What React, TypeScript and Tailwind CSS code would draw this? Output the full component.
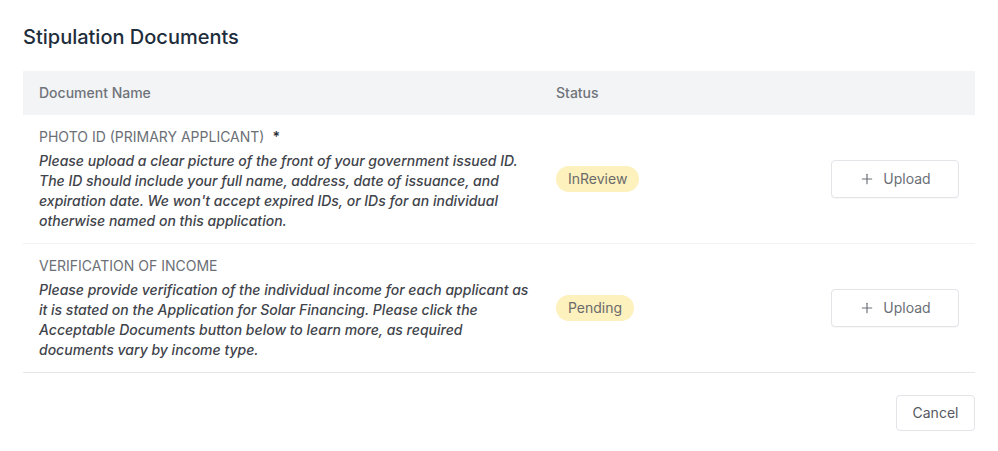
import { Plus } from 'lucide-react';

type Stip = {
  name: string;
  required?: boolean;
  description: string;
  status: string;
};

const STIPS: Stip[] = [
  {
    name: 'Photo ID (Primary Applicant)',
    required: true,
    description:
      "Please upload a clear picture of the front of your government issued ID. The ID should include your full name, address, date of issuance, and expiration date. We won't accept expired IDs, or IDs for an individual otherwise named on this application.",
    status: 'InReview',
  },
  {
    name: 'Verification of Income',
    description:
      'Please provide verification of the individual income for each applicant as it is stated on the Application for Solar Financing. Please click the Acceptable Documents button below to learn more, as required documents vary by income type.',
    status: 'Pending',
  },
];

function StatusBadge({ status }: { status: string }) {
  return (
    <span className="inline-flex h-[26px] items-center rounded-full bg-[#fdf1bd] px-3 text-sm text-[#6b6b6b]">
      {status}
    </span>
  );
}

export default function App() {
  return (
    <div
      className="min-h-screen bg-white px-[23px] pt-[23px]"
      style={{ fontFamily: 'Inter, "Noto Sans", sans-serif' }}
    >
      <h2 className="mb-5 text-xl leading-7 font-medium text-[#1e2d3b]">
        Stipulation Documents
      </h2>

      <div className="border-b border-[#e3e5e8]">
        {/* Header */}
        <div className="grid h-11 grid-cols-[517px_1fr_auto] items-center bg-[#f3f4f6] text-sm font-medium text-[#6f737a]">
          <div className="px-4">Document Name</div>
          <div className="px-4">Status</div>
          <div className="w-[160px]" />
        </div>

        {STIPS.map((s, i) => (
          <div
            key={s.name}
            className={`grid grid-cols-[517px_1fr_auto] items-center ${
              i > 0 ? 'border-t border-[#f1f2f4]' : ''
            }`}
          >
            <div className="pt-3 pr-1 pb-3 pl-4">
              <p className="text-sm leading-5 uppercase text-[#6b6f76]">
                {s.name}
                {s.required && (
                  <span className="ml-2 font-semibold text-[#2b2f36]">*</span>
                )}
              </p>
              <p className="mt-1 text-sm leading-5 font-medium italic text-[#3f444b]">
                {s.description}
              </p>
            </div>
            <div className="px-4">
              <StatusBadge status={s.status} />
            </div>
            <div className="flex w-[160px] justify-end pr-4">
              <button className="flex h-[38px] w-[128px] items-center justify-center gap-2 rounded-[4px] border border-[#e2e4e8] bg-white text-sm text-[#6b6f76] shadow-[0_1px_1px_rgba(0,0,0,0.03)]">
                <Plus className="h-4 w-4" strokeWidth={1.75} />
                Upload
              </button>
            </div>
          </div>
        ))}
      </div>

      <div className="mt-[22px] flex justify-end">
        <button className="h-9 w-[79px] rounded-[4px] border border-[#e2e4e8] bg-white text-sm text-[#55595f]">
          Cancel
        </button>
      </div>
    </div>
  );
}
